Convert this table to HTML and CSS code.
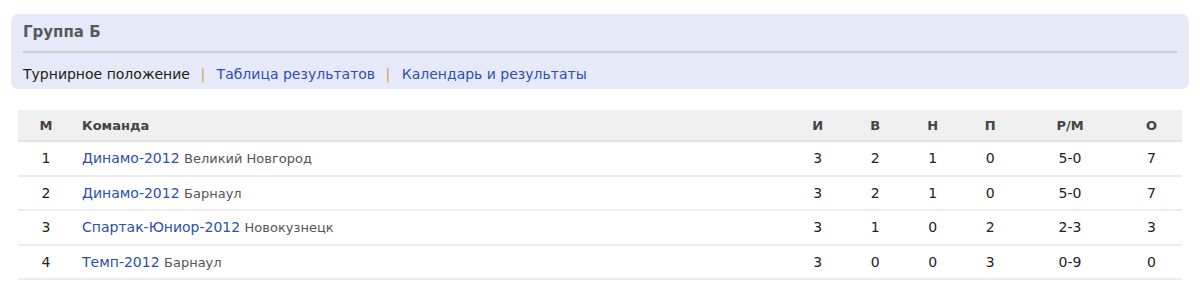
FILE: index.html
```
<!DOCTYPE html>
<html lang="ru">
<head>
<meta charset="utf-8">
<link rel="stylesheet" href="styles.css">
</head>
<body>
<div class="page">
  <div class="panel">
    <div class="panel-title">Группа Б</div>
    <div class="panel-nav">
      <span class="current">Турнирное положение</span>
      <span class="sep">|</span>
      <a href="#">Таблица результатов</a>
      <span class="sep">|</span>
      <a href="#">Календарь и результаты</a>
    </div>
  </div>
  <table class="standings">
    <colgroup>
      <col class="c-pos"><col class="c-team"><col class="c-n"><col class="c-n"><col class="c-n"><col class="c-n"><col class="c-gd"><col class="c-pts">
    </colgroup>
    <thead>
      <tr><th>М</th><th class="left">Команда</th><th>И</th><th>В</th><th>Н</th><th>П</th><th>Р/М</th><th>О</th></tr>
    </thead>
    <tbody>
      <tr><td>1</td><td class="left"><a href="#">Динамо-2012</a> <span class="city">Великий Новгород</span></td><td>3</td><td>2</td><td>1</td><td>0</td><td>5-0</td><td>7</td></tr>
      <tr><td>2</td><td class="left"><a href="#">Динамо-2012</a> <span class="city">Барнаул</span></td><td>3</td><td>2</td><td>1</td><td>0</td><td>5-0</td><td>7</td></tr>
      <tr><td>3</td><td class="left"><a href="#">Спартак-Юниор-2012</a> <span class="city">Новокузнецк</span></td><td>3</td><td>1</td><td>0</td><td>2</td><td>2-3</td><td>3</td></tr>
      <tr><td>4</td><td class="left"><a href="#">Темп-2012</a> <span class="city">Барнаул</span></td><td>3</td><td>0</td><td>0</td><td>3</td><td>0-9</td><td>0</td></tr>
    </tbody>
  </table>
</div>
</body>
</html>
```
FILE: styles.css
```
html, body {
  margin: 0;
  padding: 0;
  background: #fff;
}
body {
  font-family: "DejaVu Sans", Verdana, sans-serif;
  color: #222;
}
.page {
  padding: 14px 11px 0 11px;
}
.panel {
  background: #e6eaf8;
  border-radius: 7px;
  padding: 0 12px;
  height: 75px;
  box-sizing: border-box;
}
.panel-title {
  font-size: 15px;
  font-weight: bold;
  color: #5a5a5a;
  height: 37px;
  line-height: 37px;
  border-bottom: 2px solid #cfd0d6;
}
.panel-nav {
  font-size: 14px;
  line-height: 20px;
  padding-top: 11px;
}
.panel-nav .current {
  color: #1a1a1a;
}
.panel-nav a {
  color: #2c4fb0;
  text-decoration: none;
}
.panel-nav .sep {
  color: #d49a55;
  margin: 0 7px 0 6px;
}
.standings {
  margin: 21px 7px 0 7px;
  width: 1164px;
  border-collapse: collapse;
  table-layout: fixed;
  font-size: 14px;
}
.c-pos { width: 56px; }
.c-team { width: 715px; }
.c-n { width: 57.5px; }
.c-gd { width: 102px; }
.c-pts { width: 61px; }
.standings th {
  background: #efefef;
  color: #444;
  font-weight: bold;
  font-size: 13px;
  height: 30px;
  text-align: center;
  border-bottom: 2px solid #e2e2e2;
  padding: 0;
}
.standings td {
  height: 32.5px;
  text-align: center;
  border-bottom: 2px solid #ececec;
  padding: 0;
  color: #222;
}
.standings .left {
  text-align: left;
  padding-left: 8px;
}
.standings a {
  color: #2c4fb0;
  text-decoration: none;
}
.standings .city {
  font-size: 13px;
  color: #555;
}
```
